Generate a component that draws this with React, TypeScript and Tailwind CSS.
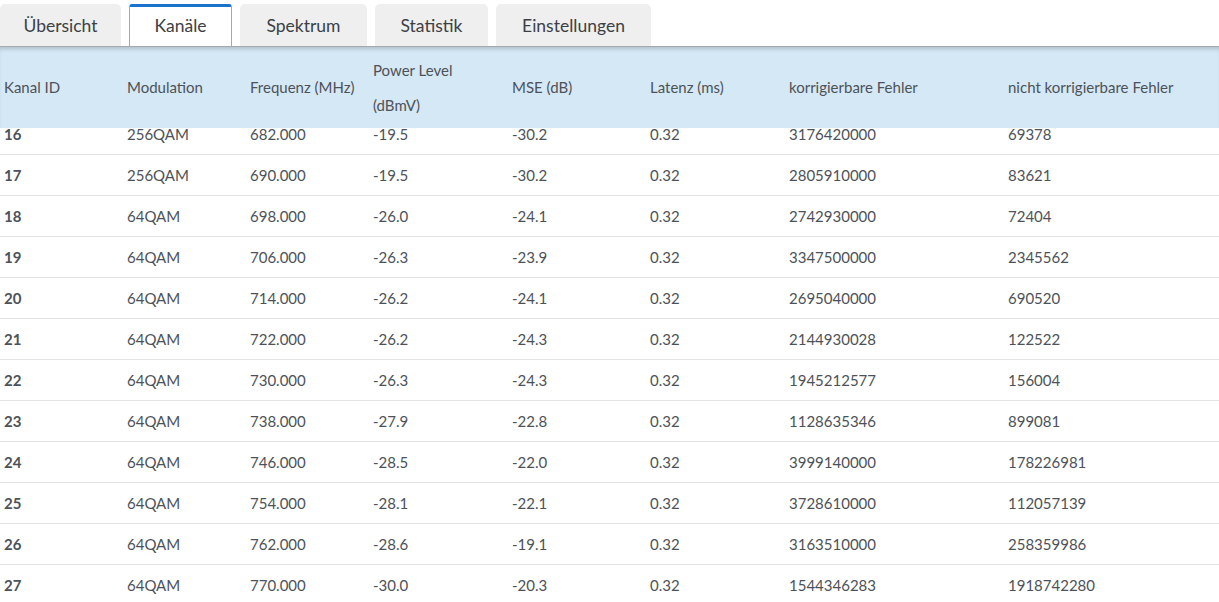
import React from "react";

const tabs = [
  { label: "Übersicht", w: "w-[121px]" },
  { label: "Kanäle", w: "w-[103px]", active: true },
  { label: "Spektrum", w: "w-[127px]" },
  { label: "Statistik", w: "w-[113px]" },
  { label: "Einstellungen", w: "w-[155px]" },
];

const rows = [
  ["16", "256QAM", "682.000", "-19.5", "-30.2", "0.32", "3176420000", "69378"],
  ["17", "256QAM", "690.000", "-19.5", "-30.2", "0.32", "2805910000", "83621"],
  ["18", "64QAM", "698.000", "-26.0", "-24.1", "0.32", "2742930000", "72404"],
  ["19", "64QAM", "706.000", "-26.3", "-23.9", "0.32", "3347500000", "2345562"],
  ["20", "64QAM", "714.000", "-26.2", "-24.1", "0.32", "2695040000", "690520"],
  ["21", "64QAM", "722.000", "-26.2", "-24.3", "0.32", "2144930028", "122522"],
  ["22", "64QAM", "730.000", "-26.3", "-24.3", "0.32", "1945212577", "156004"],
  ["23", "64QAM", "738.000", "-27.9", "-22.8", "0.32", "1128635346", "899081"],
  ["24", "64QAM", "746.000", "-28.5", "-22.0", "0.32", "3999140000", "178226981"],
  ["25", "64QAM", "754.000", "-28.1", "-22.1", "0.32", "3728610000", "112057139"],
  ["26", "64QAM", "762.000", "-28.6", "-19.1", "0.32", "3163510000", "258359986"],
  ["27", "64QAM", "770.000", "-30.0", "-20.3", "0.32", "1544346283", "1918742280"],
];

const cols = "grid grid-cols-[123px_123px_123px_139px_138px_139px_219px_1fr]";

export default function App() {
  return (
    <div
      className="w-[1219px] h-[602px] overflow-hidden bg-white text-[#4d5258]"
      style={{ fontFamily: "Lato, 'Liberation Sans', sans-serif" }}
    >
      <div className="flex items-end gap-2 h-[47px] border-b border-[#a8a8a8]">
        {tabs.map((t) =>
          t.active ? (
            <div
              key={t.label}
              className={`${t.w} h-[42px] flex items-center justify-center bg-white border-t-[3px] border-t-[#1a73cf] border-x border-x-[#a8a8a8] rounded-t-[3px] text-[17.5px] text-[#3c4045]`}
            >
              {t.label}
            </div>
          ) : (
            <div
              key={t.label}
              className={`${t.w} h-[42px] pt-[2px] flex items-center justify-center bg-[#efefef] rounded-t-[5px] text-[17.5px] text-[#3c4045]`}
            >
              {t.label}
            </div>
          )
        )}
      </div>
      <div className="relative h-[554px] overflow-hidden">
        <div
          className={`${cols} relative z-10 h-[81px] bg-[#d5e8f6] shadow-[inset_0_4px_4px_-2px_rgba(0,0,0,0.18)] text-[15px] items-center`}
        >
          <div className="pl-[4px]">Kanal ID</div>
          <div className="pl-[4px]">Modulation</div>
          <div className="pl-[4px]">Frequenz (MHz)</div>
          <div className="pl-[4px] leading-[35px]">
            Power Level
            <br />
            (dBmV)
          </div>
          <div className="pl-[4px]">MSE (dB)</div>
          <div className="pl-[4px]">Latenz (ms)</div>
          <div className="pl-[4px]">korrigierbare Fehler</div>
          <div className="pl-[4px]">nicht korrigierbare Fehler</div>
        </div>
        <div className="-mt-[14px]">
          {rows.map((r) => (
            <div
              key={r[0]}
              className={`${cols} h-[41px] border-b border-[#e2e2e2] text-[15px] items-center`}
            >
              {r.map((c, i) => (
                <div key={i} className={i === 0 ? "pl-[4px] font-bold" : "pl-[4px]"}>
                  {c}
                </div>
              ))}
            </div>
          ))}
        </div>
      </div>
    </div>
  );
}
